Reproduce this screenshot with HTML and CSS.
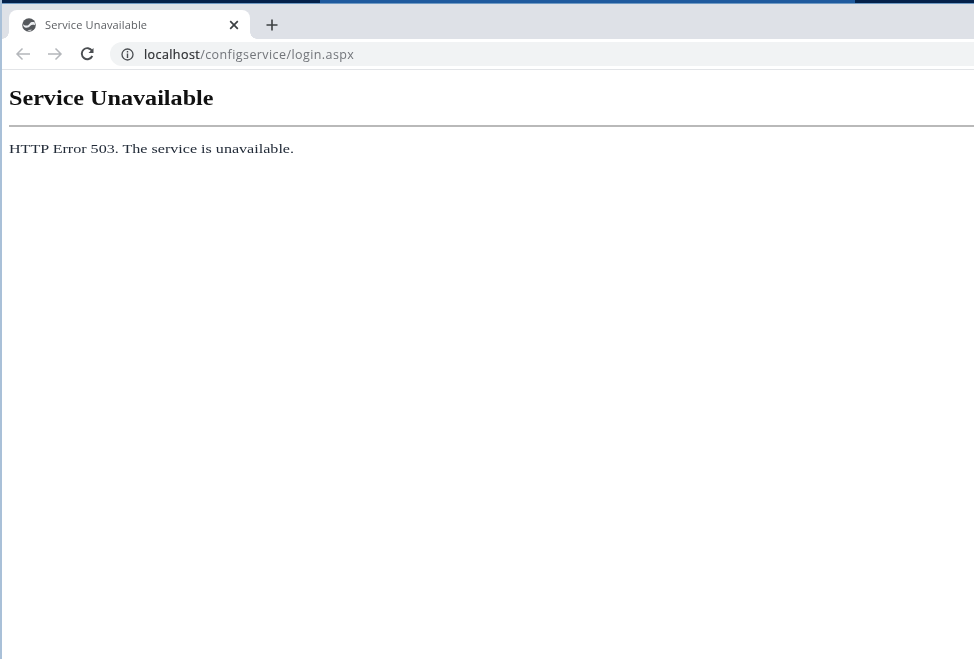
FILE: index.html
```html
<!DOCTYPE html>
<html lang="en">
<head>
<meta charset="utf-8">
<title>Service Unavailable</title>
<link rel="stylesheet" href="styles.css">
</head>
<body>
<div class="window">
  <div class="titlebar"><div class="titlebar-glow"></div></div>
  <div class="tabstrip">
    <div class="tab">
      <svg class="globe" width="14" height="14" viewBox="0 0 14 14"><circle cx="7" cy="7" r="6.800" fill="#55585c"/><path d="M12.800 4.500 C10.500 3.600 8.800 4.200 7.800 5.400 C6.800 6.600 6.200 7.400 4.600 7.600 C3.200 7.700 2 7.200 1 6.200 C1.200 8.200 2.400 9.600 4 9.800 C6 10 7.400 9 8.400 7.800 C9.400 6.800 10.800 6.400 13 7.200 Z M5.600 12.900 C6.800 12 8.400 11.400 10.200 11.800 C9 12.800 7.200 13.200 5.600 12.900 Z" fill="#eceef1"/></svg>
      <span class="tab-title">Service Unavailable</span>
      <svg class="close" width="10" height="10" viewBox="0 0 10 10"><path d="M1.200 1.200 L8.800 8.800 M8.800 1.200 L1.200 8.800" stroke="#3c4043" stroke-width="1.700" fill="none"/></svg>
    </div>
    <svg class="newtab" width="12" height="12" viewBox="0 0 12 12"><path d="M6 0.500 V11.500 M0.500 6 H11.500" stroke="#3c4043" stroke-width="1.600" fill="none"/></svg>
  </div>
  <div class="toolbar">
    <svg class="nav" width="16" height="14" viewBox="0 0 16 14"><path d="M15 7 H2 M7.500 1.500 L2 7 L7.500 12.500" stroke="#b4b7bb" stroke-width="1.500" fill="none"/></svg>
    <svg class="nav" width="16" height="14" viewBox="0 0 16 14"><path d="M1 7 H14 M8.500 1.500 L14 7 L8.500 12.500" stroke="#b4b7bb" stroke-width="1.500" fill="none"/></svg>
    <svg class="nav reload" width="15" height="14" viewBox="0 0 15 14"><path d="M12.300 9 A5.500 5.500 0 1 1 12 3.800" stroke="#4a4d51" stroke-width="1.900" fill="none"/><path d="M13.500 1 V6 H8.500Z" fill="#4a4d51"/></svg>
    <div class="omnibox">
      <svg class="info" width="13" height="13" viewBox="0 0 13 13"><circle cx="6.500" cy="6.500" r="5.500" stroke="#4a4d51" stroke-width="1.300" fill="none"/><path d="M6.500 5.500 V10 M6.500 3 V4.400" stroke="#4a4d51" stroke-width="1.400" fill="none"/></svg>
      <span class="url"><span class="host">localhost</span>/configservice/login.aspx</span>
    </div>
  </div>
  <main class="page">
    <h2 class="heading">Service Unavailable</h2>
    <hr class="rule">
    <p class="message">HTTP Error 503. The service is unavailable.</p>
  </main>
</div>
</body>
</html>
```

FILE: styles.css
```css
html, body {
  margin: 0;
  padding: 0;
  height: 100%;
  overflow: hidden;
  background: #fff;
}

.window {
  height: 659px;
  display: flex;
  flex-direction: column;
  border-left: 2px solid #a9c0d8;
  box-sizing: border-box;
  overflow: hidden;
  filter: blur(0.35px);
}

.titlebar {
  height: 4px;
  margin-left: -2px;
  background: #04214a;
  border-bottom: 1px solid #6f9ac4;
  box-sizing: border-box;
  padding-left: 320px;
  padding-right: 119px;
  flex: none;
}

.titlebar-glow {
  height: 3px;
  background: #1f5a9e;
}

.tabstrip {
  height: 35px;
  flex: none;
  background: #dee1e7;
  display: flex;
  align-items: flex-end;
  padding-left: 7px;
}

.tab {
  position: relative;
  width: 241px;
  height: 29px;
  background: #fff;
  border-radius: 8px 8px 0 0;
  display: flex;
  align-items: center;
  box-sizing: border-box;
  padding-left: 13px;
  padding-right: 11px;
}

.tab::before,
.tab::after {
  content: "";
  position: absolute;
  bottom: 0;
  width: 7px;
  height: 7px;
}

.tab::before {
  left: -7px;
  background: radial-gradient(circle at 0 0, transparent 6.500px, #fff 7px);
}

.tab::after {
  right: -7px;
  background: radial-gradient(circle at 100% 0, transparent 6.500px, #fff 7px);
}

.globe {
  flex: none;
}

.tab-title {
  margin-left: 9px;
  flex: 1;
  font: 11px "Open Sans", "Liberation Sans", sans-serif;
  letter-spacing: 0.16px;
  color: #5b5e62;
}

.close {
  flex: none;
}

.newtab {
  flex: none;
  margin-left: 16px;
  margin-bottom: 8px;
}

.toolbar {
  height: 31px;
  flex: none;
  background: #fff;
  border-bottom: 1px solid #e2e4e7;
  box-sizing: border-box;
  display: flex;
  align-items: center;
  padding-left: 13px;
  gap: 16px;
}

.nav {
  flex: none;
}

.reload {
  margin-left: 1px;
  margin-right: -1px;
}

.omnibox {
  flex: 1;
  height: 24px;
  border-radius: 12px 0 0 12px;
  background: #f1f3f4;
  display: flex;
  align-items: center;
  padding-left: 11px;
}

.url {
  margin-left: 10px;
  font: 12.500px "Open Sans", "Liberation Sans", sans-serif;
  letter-spacing: 0.42px;
  color: #72757a;
}

.host {
  color: #2c2e31;
  -webkit-text-stroke: 0.2px #2c2e31;
}

.page {
  flex: 1;
  padding-left: 7px;
  font-family: "Liberation Serif", "Times New Roman", serif;
  color: #111;
}

.heading,
.message {
  width: fit-content;
  transform: scaleX(1.207);
  transform-origin: left center;
}

.heading {
  margin: 17px 0 0;
  font-size: 20px;
  line-height: 23px;
  font-weight: bold;
}

.rule {
  margin: 15px 0 0;
  border: 0;
  height: 1.500px;
  background: #b9b9b9;
}

.message {
  margin: 14px 0 0;
  font-size: 13.330px;
  line-height: 16px;
  color: #222b38;
}
```
